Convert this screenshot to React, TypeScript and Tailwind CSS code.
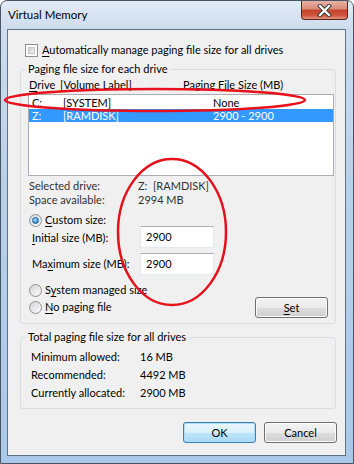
import type { ReactNode } from "react";

const font = { fontFamily: 'Lato, "Segoe UI", sans-serif' };

const Checkbox = (): JSX.Element => (
  <span className="inline-block h-[13px] w-[13px] shrink-0 border border-[#8e8f8f] bg-white p-[2px]">
    <span className="block h-full w-full border border-[#c4c4c4] bg-gradient-to-br from-[#cbcfd5] to-[#f6f6f6]" />
  </span>
);

const Radio = ({ checked }: { checked?: boolean }): JSX.Element => (
  <span className="flex h-[13px] w-[13px] shrink-0 items-center justify-center rounded-full border border-[#8e8f8f] bg-gradient-to-br from-[#d3d6da] to-[#fbfbfb]">
    {checked ? (
      <span className="h-[7px] w-[7px] rounded-full border border-[#1b5f97] bg-[radial-gradient(circle_at_40%_35%,#bfe7ff,#3b96d6_60%,#1c5d93)]" />
    ) : null}
  </span>
);

const U = ({ children }: { children: ReactNode }): JSX.Element => (
  <span className="underline underline-offset-[2px]">{children}</span>
);

const Group = ({
  title,
  children,
  className,
}: {
  title: string;
  children: ReactNode;
  className: string;
}): JSX.Element => (
  <div
    className={`relative ml-[12px] w-[316px] rounded-[3px] border border-[#d5dfe5] ${className}`}
  >
    <span className="absolute left-[4px] top-[-9px] bg-[#f0f0f0] px-[3px] leading-[16px]">
      {title}
    </span>
    {children}
  </div>
);

const Button = ({
  children,
  primary,
  className,
}: {
  children: ReactNode;
  primary?: boolean;
  className?: string;
}): JSX.Element => (
  <button
    type="button"
    className={`h-[21px] w-[73px] rounded-[3px] border text-[11px] leading-none text-black ${
      primary
        ? "border-[#3c7fb1] bg-[linear-gradient(#eaf6fd_0%,#d9f0fc_50%,#bee6fd_50%,#a7d9f5_100%)] shadow-[inset_0_0_0_1px_#aedbf5]"
        : "border-[#707070] bg-[linear-gradient(#f2f2f2_0%,#ebebeb_50%,#dddddd_50%,#cfcfcf_100%)] shadow-[inset_0_0_0_1px_#fcfcfc]"
    } ${className ?? ""}`}
  >
    {children}
  </button>
);

const SizeInput = ({ value }: { value: string }): JSX.Element => (
  <div className="ml-auto mr-[121px] flex h-[22px] w-[74px] items-center border border-[#e3e9ef] border-t-[#abadb3] bg-white px-[5px]">
    {value}
  </div>
);

const App = (): JSX.Element => {
  return (
    <div
      style={font}
      className="relative h-[464px] w-[354px] overflow-hidden rounded-t-[7px] border border-[#4a5563] bg-[linear-gradient(#e2ebf5_0%,#cddcee_6%,#b9d0ea_40%,#aac8ea_100%)] text-[11px] text-black"
    >
      {/* title bar */}
      <div className="flex h-[28px] items-center pl-[7px]">
        <span className="text-[11.5px] leading-none">Virtual Memory</span>
        <div className="ml-auto mr-[5px] -mt-[9px] flex h-[19px] w-[47px] items-center justify-center rounded-b-[4px] border border-t-0 border-[#5b231a] bg-[linear-gradient(#e8b2a6_0%,#d88a76_45%,#c4432b_50%,#d0553c_80%,#e39481_100%)]">
          <svg width="15" height="13" viewBox="0 0 15 13">
            <path d="M3 2 L12 11 M12 2 L3 11" stroke="#3a3a3a" strokeWidth="4.2" strokeLinecap="square" />
            <path d="M3 2 L12 11 M12 2 L3 11" stroke="#ffffff" strokeWidth="2.2" strokeLinecap="square" />
          </svg>
        </div>
      </div>

      {/* client area */}
      <div className="ml-[6px] h-[427px] w-[339px] border border-[#5f7387] bg-[#f0f0f0] pt-[13px]">
        <div className="flex h-[15px] items-center gap-[4px] pl-[17px]">
          <Checkbox />
          <span>
            <U>A</U>utomatically manage paging file size for all drives
          </span>
        </div>

        <Group title="Paging file size for each drive" className="mt-[11px] pb-[6px]">
          <div className="relative mt-[8px] ml-[7px] h-[14px] leading-[14px]">
            <span className="absolute left-[1px]">
              <U>D</U>rive
            </span>
            <span className="absolute left-[32px]">[Volume Label]</span>
            <span className="absolute left-[155px]">Paging File Size (MB)</span>
          </div>
          <div className="mt-[2px] ml-[7px] h-[82px] w-[306px] border border-[#abadb3] bg-white pt-[1px]">
            {[
              { drive: "C:", label: "[SYSTEM]", size: "None", selected: false },
              { drive: "Z:", label: "[RAMDISK]", size: "2900 - 2900", selected: true },
            ].map((row) => (
              <div
                key={row.drive}
                className={`relative h-[13px] leading-[13px] ${
                  row.selected ? "bg-[#3399ff] text-white" : ""
                }`}
              >
                <span className="absolute left-[3px]">{row.drive}</span>
                <span className="absolute left-[34px]">{row.label}</span>
                <span className="absolute left-[184px]">{row.size}</span>
              </div>
            ))}
          </div>

          <div className="mt-[3px] flex h-[14px] items-center pl-[8px]">
            <span className="w-[109px] text-[#303030]">Selected drive:</span>
            <span className="text-[#303030]">Z:&nbsp;&nbsp;[RAMDISK]</span>
          </div>
          <div className="flex h-[14px] items-center pl-[8px]">
            <span className="w-[109px] text-[#303030]">Space available:</span>
            <span className="text-[#303030]">2994 MB</span>
          </div>

          <div className="mt-[7px] flex h-[12px] items-center gap-[3px] pl-[8px]">
            <Radio checked />
            <span>
              <U>C</U>ustom size:
            </span>
          </div>
          <div className="flex h-[22px] items-center pl-[11px]">
            <span className="whitespace-nowrap pt-[3px]">
              <U>I</U>nitial size (MB):
            </span>
            <SizeInput value="2900" />
          </div>
          <div className="mt-[5px] flex h-[22px] items-center pl-[11px]">
            <span className="whitespace-nowrap">
              Ma<U>x</U>imum size (MB):
            </span>
            <SizeInput value="2900" />
          </div>

          <div className="mt-[8px] flex h-[14px] items-center gap-[3px] pl-[8px]">
            <Radio />
            <span>
              S<U>y</U>stem managed size
            </span>
          </div>
          <div className="flex h-[20px] items-center gap-[3px] pl-[8px]">
            <Radio />
            <span>
              <U>N</U>o paging file
            </span>
            <Button className="ml-auto mr-[7px]">
              <U>S</U>et
            </Button>
          </div>
        </Group>

        <Group title="Total paging file size for all drives" className="mt-[13px] pt-[10px] pb-[6px]">
          {[
            ["Minimum allowed:", "16 MB"],
            ["Recommended:", "4492 MB"],
            ["Currently allocated:", "2900 MB"],
          ].map(([label, value]) => (
            <div key={label} className="flex h-[18px] items-center pl-[10px]">
              <span className="w-[109px] whitespace-nowrap">{label}</span>
              <span>{value}</span>
            </div>
          ))}
        </Group>

        <div className="mt-[13px] flex justify-end gap-[8px] pr-[8px]">
          <Button primary>OK</Button>
          <Button>Cancel</Button>
        </div>
      </div>

      {/* red annotation marks */}
      <svg className="pointer-events-none absolute left-[-1px] top-[-1px]" width="354" height="464">
        <ellipse cx="155" cy="100" rx="150" ry="11" fill="none" stroke="#e8101a" strokeWidth="2.5" />
        <ellipse cx="172" cy="232" rx="54" ry="73" fill="none" stroke="#e8101a" strokeWidth="2.5" />
      </svg>
    </div>
  );
};

export default App;
